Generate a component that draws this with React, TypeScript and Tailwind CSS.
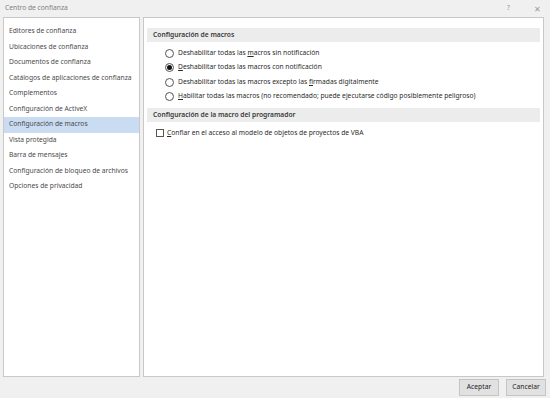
import React from "react";

const navItems = [
  "Editores de confianza",
  "Ubicaciones de confianza",
  "Documentos de confianza",
  "Catálogos de aplicaciones de confianza",
  "Complementos",
  "Configuración de ActiveX",
  "Configuración de macros",
  "Vista protegida",
  "Barra de mensajes",
  "Configuración de bloqueo de archivos",
  "Opciones de privacidad",
];

const Radio = ({ checked, children }: { checked?: boolean; children: React.ReactNode }) => (
  <div className="flex h-[14.5px] items-center">
    <span className="flex h-[9px] w-[9px] items-center justify-center rounded-full border border-[#555] bg-white">
      {checked && <span className="h-[5px] w-[5px] rounded-full bg-[#111]" />}
    </span>
    <span className="ml-[4px] text-[#2a2a2a]">{children}</span>
  </div>
);

const SectionHeader = ({ children }: { children: React.ReactNode }) => (
  <div className="flex h-[14px] items-center bg-[#ececec] pl-[6px] font-semibold text-[#3a3a3a]">
    {children}
  </div>
);

export default function App() {
  return (
    <div
      className="flex h-[398px] w-[550px] flex-col whitespace-nowrap bg-[#f0f0f0] text-[6.7px] leading-none"
      style={{ fontFamily: '"Noto Sans", "Open Sans", sans-serif' }}
    >
      <div className="flex h-[17px] items-center pl-[5px] pr-[9px] text-[#808080]">
        <span>Centro de confianza</span>
        <span className="ml-auto mr-[24px] text-[#999]">?</span>
        <span className="text-[8px] font-light text-[#999]">✕</span>
      </div>

      <div className="flex h-[360px] gap-[3px] pl-[3px] pr-[6px]">
        <div className="w-[137px] border border-[#c8c8c8] bg-white pt-[6px]">
          {navItems.map((item) => (
            <div
              key={item}
              className={
                item === "Configuración de macros"
                  ? "flex h-[15.5px] items-center bg-[#c9dcf2] pl-[5px] text-[#4a4a4a]"
                  : "flex h-[15.5px] items-center pl-[5px] text-[#4a4a4a]"
              }
            >
              {item}
            </div>
          ))}
        </div>

        <div className="flex-1 border border-[#c8c8c8] bg-white px-[3px] pt-[10px]">
          <SectionHeader>Configuración de macros</SectionHeader>
          <div className="pl-[18px] pt-[4px]">
            <Radio>
              Deshabilitar todas las <u>m</u>acros sin notificación
            </Radio>
            <Radio checked>
              <u>D</u>eshabilitar todas las macros con notificación
            </Radio>
            <Radio>
              Deshabilitar todas las macros excepto las <u>f</u>irmadas digitalmente
            </Radio>
            <Radio>
              <u>H</u>abilitar todas las macros (no recomendado; puede ejecutarse código posiblemente peligroso)
            </Radio>
          </div>
          <div className="mt-[4px]">
            <SectionHeader>Configuración de la macro del programador</SectionHeader>
          </div>
          <div className="flex h-[22px] items-center pl-[9px]">
            <span className="h-[8px] w-[8px] border border-[#555] bg-white" />
            <span className="ml-[3px] text-[#2a2a2a]">
              <u>C</u>onfiar en el acceso al modelo de objetos de proyectos de VBA
            </span>
          </div>
        </div>
      </div>

      <div className="flex flex-1 items-center justify-end gap-[7px] pr-[4px]">
        <button className="h-[17px] w-[40px] border border-[#c4c4c4] bg-[#e1e1e1] text-[#222]">
          Aceptar
        </button>
        <button className="h-[17px] w-[40px] border border-[#c4c4c4] bg-[#e1e1e1] text-[#222]">
          Cancelar
        </button>
      </div>
    </div>
  );
}
